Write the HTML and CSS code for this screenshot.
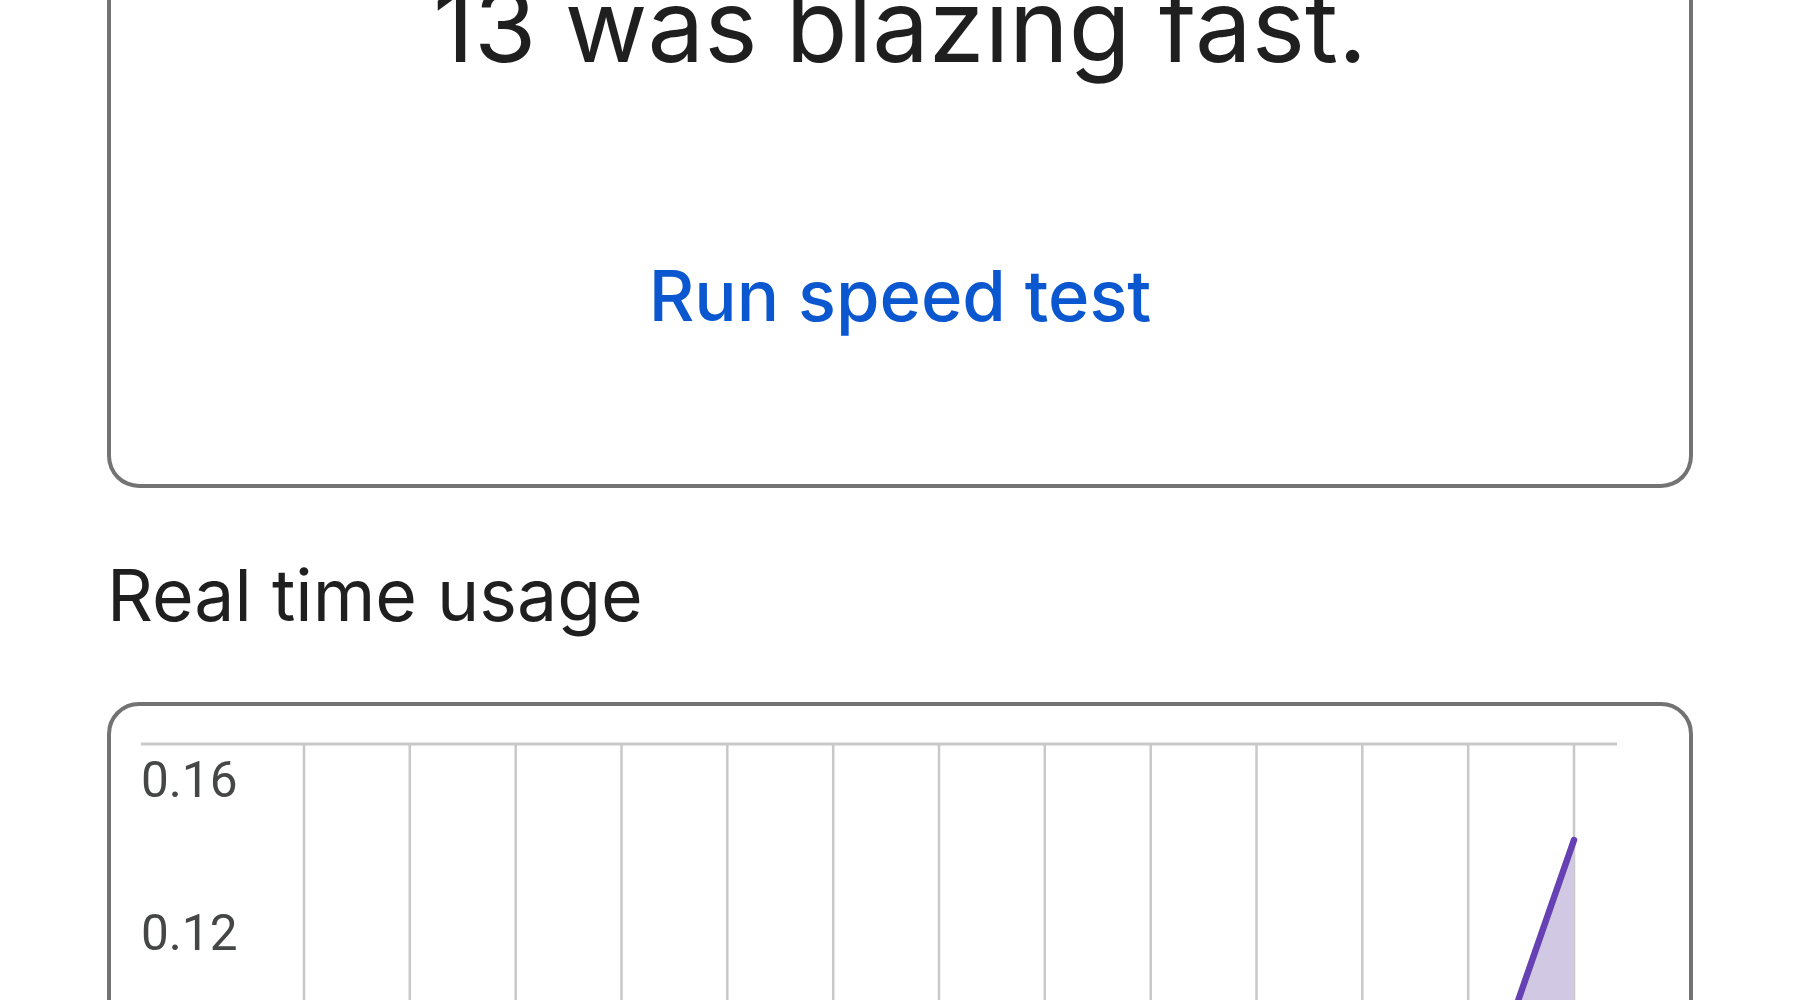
FILE: index.html
```html
<!DOCTYPE html>
<html lang="en">
<head>
<meta charset="utf-8">
<title>Speed</title>
<link rel="stylesheet" href="styles.css">
</head>
<body>
<main class="page">
  <section class="speed-card">
    <h1 class="speed-title">13 was blazing fast.</h1>
    <a class="speed-link" href="#">Run speed test</a>
  </section>

  <h2 class="section-title">Real time usage</h2>

  <section class="chart-card">
    <svg class="chart" width="1578" height="300" viewBox="0 0 1578 300" xmlns="http://www.w3.org/2000/svg">
      <g transform="translate(-1,-1)">
        <line class="grid-top" x1="31" y1="39" x2="1507" y2="39"/>
        <g class="grid">
          <line x1="194" y1="40" x2="194" y2="302"/>
          <line x1="299.8" y1="40" x2="299.8" y2="302"/>
          <line x1="405.7" y1="40" x2="405.7" y2="302"/>
          <line x1="511.5" y1="40" x2="511.5" y2="302"/>
          <line x1="617.3" y1="40" x2="617.3" y2="302"/>
          <line x1="723.2" y1="40" x2="723.2" y2="302"/>
          <line x1="829" y1="40" x2="829" y2="302"/>
          <line x1="934.8" y1="40" x2="934.8" y2="302"/>
          <line x1="1040.7" y1="40" x2="1040.7" y2="302"/>
          <line x1="1146.5" y1="40" x2="1146.5" y2="302"/>
          <line x1="1252.3" y1="40" x2="1252.3" y2="302"/>
          <line x1="1358.2" y1="40" x2="1358.2" y2="302"/>
          <line x1="1464" y1="40" x2="1464" y2="302"/>
        </g>
        <text class="axis-label" x="31" y="92">0.16</text>
        <text class="axis-label" x="31" y="245">0.12</text>
        <polygon class="area" points="1464,135 1405.9,302 1464,302"/>
        <polyline class="series" points="1464,135 1405.9,302"/>
      </g>
    </svg>
  </section>
</main>
</body>
</html>
```
FILE: styles.css
```css
html, body {
  margin: 0;
  padding: 0;
  background: #ffffff;
  overflow: hidden;
}

.page {
  display: flex;
  flex-direction: column;
  padding: 0 107px;
  font-family: "Inter", "Roboto", sans-serif;
  color: #1f1f1f;
}

.speed-card {
  display: flex;
  flex-direction: column;
  align-items: center;
  border: 4px solid #737373;
  border-top: 0;
  border-radius: 0 0 32px 32px;
  padding: 0 0 145px;
}

.speed-title {
  margin: 0;
  font-size: 101px;
  font-weight: 400;
  line-height: 50px;
  color: #1f1f1f;
}

.speed-link {
  margin-top: 203px;
  font-size: 70.5px;
  font-weight: 500;
  line-height: 86px;
  color: #0b57d0;
  text-decoration: none;
}

.section-title {
  margin: 64px 0 0 0;
  font-size: 71.5px;
  font-weight: 400;
  line-height: 86px;
  color: #1f1f1f;
}

.chart-card {
  margin-top: 64px;
  border: 4px solid #737373;
  border-radius: 32px;
  height: 400px;
  overflow: hidden;
}

.chart {
  display: block;
}

.grid-top {
  stroke: #c8c8c8;
  stroke-width: 3;
}

.grid line {
  stroke: #c8c8c8;
  stroke-width: 2.5;
}

.axis-label {
  font-family: "Roboto", sans-serif;
  font-size: 49.5px;
  fill: #444746;
}

.area {
  fill: #d1c9e3;
}

.series {
  fill: none;
  stroke: #6641b3;
  stroke-width: 6.5;
  stroke-linecap: round;
}
```
